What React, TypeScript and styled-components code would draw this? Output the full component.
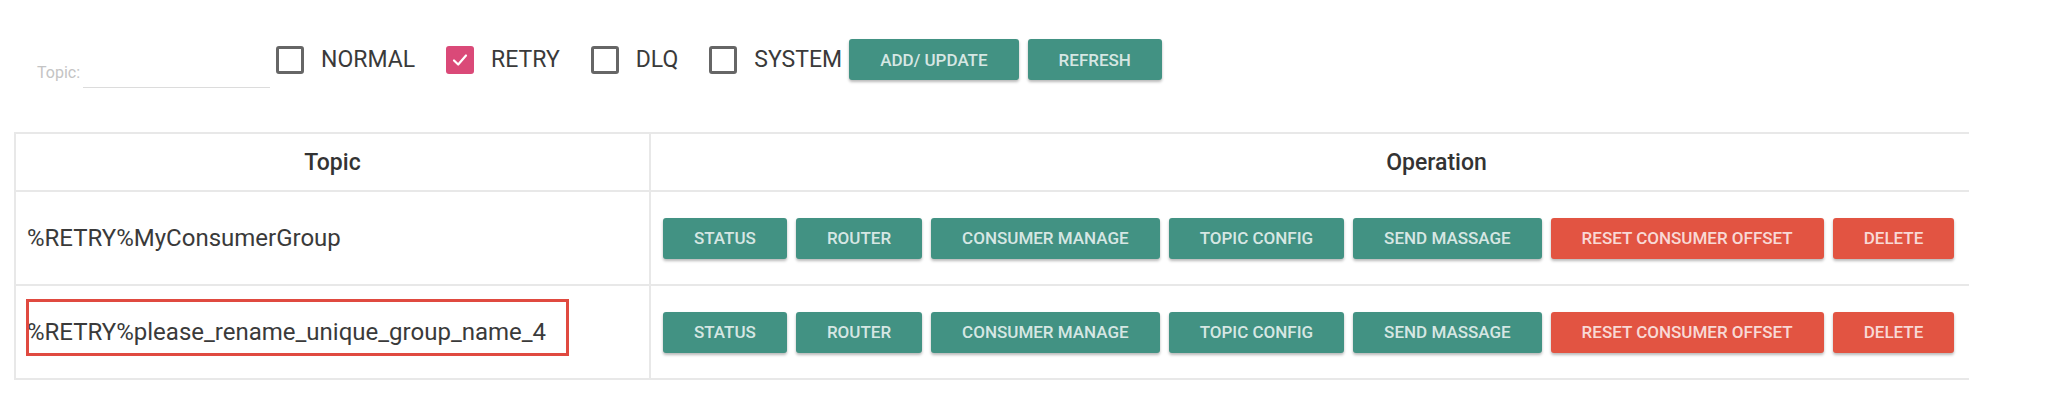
import React from "react";
import styled, { createGlobalStyle } from "styled-components";

const GlobalStyle = createGlobalStyle`
  html, body {
    margin: 0;
    padding: 0;
    background: #ffffff;
    font-family: Roboto, "Noto Sans", sans-serif;
  }
`;

const Page = styled.div`
  padding: 39px 0 0 14px;
`;

const Toolbar = styled.div`
  display: flex;
  align-items: center;
  height: 41px;
`;

const TopicField = styled.label`
  display: flex;
  align-items: flex-end;
  height: 30px;
  margin-left: 23px;
  margin-right: 6px;
  margin-top: 27px;
`;

const FieldLabel = styled.span`
  font-size: 16px;
  color: #c4c4c4;
  line-height: 18px;
  margin-right: 3px;
  margin-bottom: 6px;
`;

const FieldInput = styled.input`
  width: 187px;
  height: 29px;
  border: none;
  border-bottom: 1px solid #dcdcdc;
  outline: none;
  padding: 0;
  background: transparent;
  font-family: inherit;
  font-size: 16px;
`;

const CheckItem = styled.label<{ $last?: boolean }>`
  display: flex;
  align-items: center;
  margin-right: ${(p) => (p.$last ? "7px" : "31px")};
`;

const Box = styled.span<{ $checked?: boolean }>`
  box-sizing: border-box;
  width: 28px;
  height: 28px;
  border-radius: 3px;
  border: ${(p) => (p.$checked ? "none" : "3px solid #666666")};
  background: ${(p) => (p.$checked ? "#da4978" : "transparent")};
  display: flex;
  align-items: center;
  justify-content: center;
  margin-right: 17px;
`;

const CheckLabel = styled.span`
  font-size: 23px;
  color: #3a3a3a;
  line-height: 28px;
`;

const Button = styled.button<{ $danger?: boolean }>`
  height: 41px;
  padding: 0 31px;
  border: none;
  border-radius: 3px;
  background: ${(p) => (p.$danger ? "#e25442" : "#429283")};
  color: rgba(255, 255, 255, 0.8);
  font-family: Roboto, sans-serif;
  font-size: 17px;
  font-weight: 500;
  text-transform: uppercase;
  box-shadow: 0 2px 3px rgba(0, 0, 0, 0.28);
  white-space: nowrap;
  cursor: pointer;
`;

const ToolButtons = styled.div`
  display: flex;
  gap: 9px;
`;

const TableViewport = styled.div`
  margin-top: 52px;
  width: 1955px;
  overflow: hidden;
`;

const Table = styled.table`
  width: 2208px;
  border-collapse: collapse;
  table-layout: fixed;
`;

const HeadCell = styled.th`
  height: 56px;
  font-size: 23px;
  font-weight: 500;
  color: #333333;
  text-align: center;
  border-top: 2px solid #e8e8e8;
  border-bottom: 2px solid #e8e8e8;
  border-left: 2px solid #e8e8e8;
  padding: 0;
`;

const Cell = styled.td`
  position: relative;
  height: 92px;
  border-bottom: 2px solid #e8e8e8;
  border-left: 2px solid #e8e8e8;
  padding: 0 0 0 11px;
  font-size: 24px;
  color: #3a3a3a;
  vertical-align: middle;
  white-space: nowrap;
`;

const OpButtons = styled.div`
  display: flex;
  gap: 9px;
  align-items: center;
  padding-left: 1px;
`;

const Annotation = styled.div`
  position: absolute;
  left: 10px;
  top: 13px;
  width: 543px;
  height: 57px;
  box-sizing: border-box;
  border: 3px solid #e04a40;
  pointer-events: none;
`;

const Check = () => (
  <svg width="20" height="20" viewBox="0 0 20 20">
    <path d="M4 10.5 L8.2 14.5 L16 5.5" fill="none" stroke="#ffffff" strokeWidth="2.2" strokeLinecap="round" strokeLinejoin="round" />
  </svg>
);

const filters = [
  { label: "NORMAL", checked: false },
  { label: "RETRY", checked: true },
  { label: "DLQ", checked: false },
  { label: "SYSTEM", checked: false },
];

const ops = [
  { label: "STATUS" },
  { label: "ROUTER" },
  { label: "CONSUMER MANAGE" },
  { label: "TOPIC CONFIG" },
  { label: "SEND MASSAGE" },
  { label: "RESET CONSUMER OFFSET", danger: true },
  { label: "DELETE", danger: true },
];

const rows = [
  { topic: "%RETRY%MyConsumerGroup", marked: false },
  { topic: "%RETRY%please_rename_unique_group_name_4", marked: true },
];

export default function App() {
  return (
    <Page>
      <GlobalStyle />
      <Toolbar>
        <TopicField>
          <FieldLabel>Topic:</FieldLabel>
          <FieldInput />
        </TopicField>
        {filters.map((f, i) => (
          <CheckItem key={f.label} $last={i === filters.length - 1}>
            <Box $checked={f.checked}>{f.checked && <Check />}</Box>
            <CheckLabel>{f.label}</CheckLabel>
          </CheckItem>
        ))}
        <ToolButtons>
          <Button>ADD/ UPDATE</Button>
          <Button>REFRESH</Button>
        </ToolButtons>
      </Toolbar>
      <TableViewport>
        <Table>
          <colgroup>
            <col style={{ width: 635 }} />
            <col />
          </colgroup>
          <thead>
            <tr>
              <HeadCell>Topic</HeadCell>
              <HeadCell>Operation</HeadCell>
            </tr>
          </thead>
          <tbody>
            {rows.map((r) => (
              <tr key={r.topic}>
                <Cell>
                  {r.topic}
                  {r.marked && <Annotation />}
                </Cell>
                <Cell>
                  <OpButtons>
                    {ops.map((o) => (
                      <Button key={o.label} $danger={o.danger}>
                        {o.label}
                      </Button>
                    ))}
                  </OpButtons>
                </Cell>
              </tr>
            ))}
          </tbody>
        </Table>
      </TableViewport>
    </Page>
  );
}
